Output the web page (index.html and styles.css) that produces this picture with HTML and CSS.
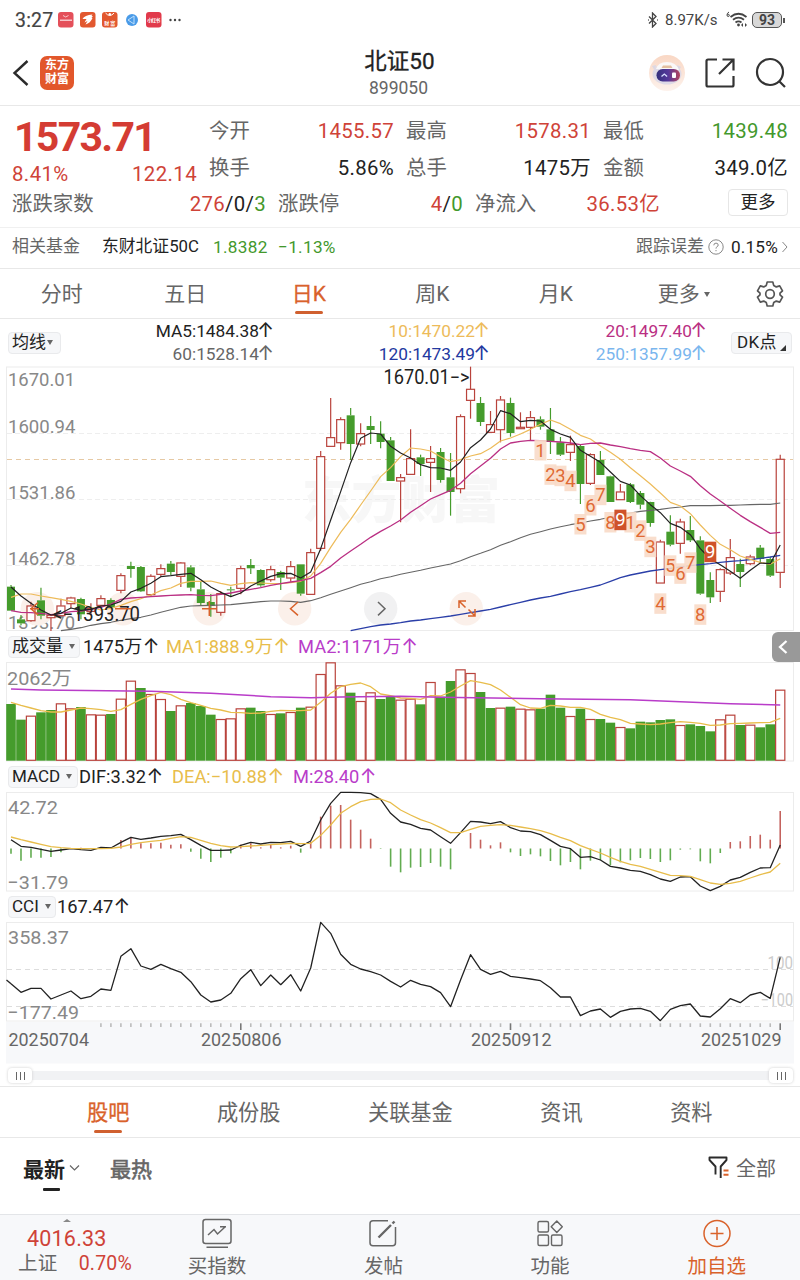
FILE: index.html
```html
<!DOCTYPE html>
<html lang="zh-CN">
<head>
<meta charset="utf-8">
<title>北证50 899050</title>
<link rel="stylesheet" href="styles.css">
</head>
<body>
<div class="status">
  <span class="clock">3:27</span>
  <svg class="apps" width="126" height="18" viewBox="0 0 126 18">
    <rect x="1" y="1" width="15.5" height="15.5" rx="3" fill="#e4505a"/>
    <path d="M6 4.500q2.700 3 5.500 0" fill="none" stroke="#fbd5d8" stroke-width=".9"/>
    <rect x="3" y="8.500" width="12" height="1.500" fill="#f6c6ca"/>
    <rect x="23" y="1" width="15.500" height="15.500" rx="3" fill="#e2582f"/>
    <path d="M25.500 8q2-4 10-4.500l-1 1.500 1.500.2-1.500 1.500 1 .3q-2 5-7 6.500l2-3.500-3 1.500 2-3.500z" fill="#fff"/>
    <rect x="45" y="1" width="15.500" height="15.500" rx="3" fill="#e2582f"/>
    <path d="M48.500 2q4.300 5 8.600 0" fill="none" stroke="#fff" stroke-width="1"/><circle cx="52.800" cy="3.300" r="1.200" fill="#fff"/>
    <text x="47.300" y="13.500" class="micro" textLength="11">财富</text>
    <circle cx="75" cy="9" r="6" fill="#4a9be8"/><path d="M71 9l6-4v8z" fill="none" stroke="#bfe0fb"/>
    <rect x="89" y="1" width="15.500" height="15.500" rx="3" fill="#e13a4b"/>
    <text x="90.300" y="11" class="micro" textLength="13">小红书</text>
    <g fill="#444"><circle cx="113.500" cy="9" r="1.200"/><circle cx="118" cy="9" r="1.200"/><circle cx="122.500" cy="9" r="1.200"/></g>
  </svg>
  <span class="grow"></span>
  <svg width="12" height="16" viewBox="0 0 12 16" fill="none" stroke="#444" stroke-width="1.300"><path d="M2 4.500l7 7L5.500 15V1L9 4.500l-7 7"/><path d="M1 8h.8M10 8h.8"/></svg>
  <span class="net">8.97K/s</span>
  <svg class="wifi" width="24" height="18" viewBox="0 0 24 18" fill="none" stroke="#444" stroke-width="1.800">
    <path d="M5.500 7q8-6.500 16 0M8 9.800q5.500-4.300 11 0M10.500 12.500q3-2.200 6 0"/><circle cx="13.500" cy="15" r="1.400" fill="#444" stroke="none"/><path d="M16 15l2-2v4zM22 15l-2-2v4z" fill="#444" stroke="none"/><path d="M4 2q-2 1-2 3 0 1.500 1.200 1.500T4.300 5.200 2.500 4.300" stroke-width="1"/>
  </svg>
  <span class="battery">93</span><span class="nub"></span>
</div>

<header class="header">
  <svg width="18" height="28" viewBox="0 0 18 28" fill="none" stroke="#2b2b2b" stroke-width="2.400"><path d="M15.500 2L2.500 14l13 12"/></svg>
  <div class="logo"><span>东方</span><span>财富</span></div>
  <div class="title"><h1>北证50</h1><p>899050</p></div>
  <svg class="robot" width="36" height="36" viewBox="0 0 36 36">
    <defs><linearGradient id="skin" x2="0" y2="1"><stop offset="0" stop-color="#f9d7c4"/><stop offset="1" stop-color="#fdf2ec"/></linearGradient><linearGradient id="visor"><stop offset="0" stop-color="#33307c"/><stop offset=".5" stop-color="#55389a"/><stop offset="1" stop-color="#b5455c"/></linearGradient></defs>
    <circle cx="18" cy="18" r="18" fill="url(#skin)"/>
    <path d="M3 11l4-1-1 6zM32 12l-4-2 1 6z" fill="#dcd8e4"/>
    <ellipse cx="18" cy="19" rx="14.500" ry="10.500" fill="#dedae6"/><path d="M7 14q2-7 11-7 9 0 12 8z" fill="#faf8f8"/><path d="M14 10.500h8l1.500 2.500h-11z" fill="#e2bfa0"/>
    <rect x="7.500" y="14" width="23.500" height="12.500" rx="6.200" fill="url(#visor)"/><path d="M12.500 21.500l2.800-2.500 2.800 2.500" fill="none" stroke="#d8deff" stroke-width="1.300"/><rect x="23" y="17.500" width="4" height="5.500" rx="1" fill="#fff"/>
  </svg>
  <svg class="share" width="30" height="30" viewBox="0 0 30 30" fill="none" stroke="#333" stroke-width="2.200"><path d="M12 1.500H3Q1.500 1.500 1.500 3v24q0 1.500 1.500 1.500h24q1.500 0 1.500-1.500V18M17.500 1.500h11v11M28.500 1.500L14 16"/></svg>
  <svg class="find" width="32" height="32" viewBox="0 0 32 32" fill="none" stroke="#333" stroke-width="2.200"><circle cx="15" cy="15" r="13"/><path d="M24 24l6 6"/></svg>
</header>

<section class="quote">
  <div class="top">
    <div class="main">
      <div class="price">1573.71</div>
      <div class="delta"><span>8.41%</span><span>122.14</span></div>
    </div>
    <dl class="stats">
      <div><dt>今开</dt><dd class="up">1455.57</dd></div><div><dt>最高</dt><dd class="up">1578.31</dd></div><div><dt>最低</dt><dd class="down">1439.48</dd></div>
      <div><dt>换手</dt><dd>5.86%</dd></div><div><dt>总手</dt><dd>1475万</dd></div><div><dt>金额</dt><dd>349.0亿</dd></div>
    </dl>
  </div>
  <dl class="breadth">
    <div class="b1"><dt>涨跌家数</dt><dd><span class="up">276</span>/0/<span class="down">3</span></dd></div>
    <div><dt>涨跌停</dt><dd><span class="up">4</span>/<span class="down">0</span></dd></div>
    <div><dt>净流入</dt><dd class="up">36.53亿</dd></div>
    <div class="more">更多</div>
  </dl>
</section>

<div class="fund">
  <span class="k">相关基金</span><span class="name">东财北证50C</span><span class="down v1">1.8382</span><span class="down v2">−1.13%</span>
  <span class="grow"></span>
  <span class="k">跟踪误差</span>
  <svg class="help" width="16" height="16" viewBox="0 0 16 16" fill="none" stroke="#888"><circle cx="8" cy="8" r="7.200"/><path d="M5.800 6.300q.1-2.200 2.200-2.200t2.200 1.900q0 1.200-1.200 1.800T8 9.600M8 11v1.200"/></svg>
  <span class="err">0.15%</span>
  <svg width="8" height="12" viewBox="0 0 8 12" fill="none" stroke="#888"><path d="M1.500 1l4.500 5-4.500 5"/></svg>
</div>

<nav class="periods">
  <a>分时</a><a>五日</a><a class="on">日K</a><a>周K</a><a>月K</a><a class="drop">更多<i class="tri"></i></a>
  <svg width="28" height="28" viewBox="0 0 28 28" fill="none" stroke="#555" stroke-width="1.700" stroke-linejoin="round"><path d="M11.200 2h5.600l.9 3.400 2.600 1.500 3.400-1 2.800 4.900-2.500 2.400v1.600l2.500 2.400-2.800 4.900-3.400-1-2.600 1.500-.9 3.400h-5.600l-.9-3.400-2.600-1.500-3.400 1-2.800-4.900 2.500-2.400v-1.600L1.500 10.800l2.800-4.900 3.400 1 2.600-1.500z"/><circle cx="14" cy="14" r="4.300"/></svg>
</nav>

<div class="averages">
  <span class="pill p1">均线<i class="tri"></i></span>
  <div class="ma">
    <span>MA5:1484.38<b>↑</b></span><span class="c10">10:1470.22<b>↑</b></span><span class="c20">20:1497.40<b>↑</b></span>
    <span class="c60">60:1528.14<b>↑</b></span><span class="c120">120:1473.49<b>↑</b></span><span class="c250">250:1357.99<b>↑</b></span>
  </div>
  <span class="pill p2">DK点<i class="corner"></i></span>
</div>

<svg id="price" class="chart" width="800" height="266" viewBox="0 6 800 266"></svg>
<div class="ind"><span class="pill i1">成交量<i class="tri"></i></span><span class="w1">1475万<b>↑</b></span><span class="yl w2">MA1:888.9万<b>↑</b></span><span class="pu">MA2:1171万<b>↑</b></span>
  <span class="handle"><svg width="12" height="16" viewBox="0 0 12 16" fill="none" stroke="#fff" stroke-width="2.300"><path d="M9.500 2L3 8l6.500 6"/></svg></span>
</div>
<svg id="volume" class="chart" width="800" height="100" viewBox="0 32 800 100"></svg>
<div class="ind"><span class="pill i2">MACD<i class="tri"></i></span><span class="w3">DIF:3.32<b>↑</b></span><span class="yl w4">DEA:−10.88<b>↑</b></span><span class="pu">M:28.40<b>↑</b></span></div>
<svg id="macd" class="chart" width="800" height="100" viewBox="0 162 800 100"></svg>
<div class="ind"><span class="pill i3">CCI<i class="tri"></i></span><span>167.47<b>↑</b></span></div>
<svg id="cci" class="chart" width="800" height="100" viewBox="0 32 800 100"></svg>
<svg id="axis" class="chart" width="800" height="42" viewBox="0 132 800 42"></svg>
<div class="range"><span class="knob"><i></i><i></i><i></i></span><span class="knob"><i></i><i></i><i></i></span></div>

<nav class="tabs"><a class="on">股吧</a><a>成份股</a><a>关联基金</a><a>资讯</a><a>资料</a></nav>
<div class="sort">
  <a class="on">最新</a>
  <svg class="chev" width="11" height="8" viewBox="0 0 11 8" fill="none" stroke="#666" stroke-width="1.200"><path d="M1 1.500l4.500 4.500L10 1.500"/></svg>
  <a class="hot">最热</a><span class="grow"></span>
  <svg class="filter" width="22" height="23" viewBox="0 0 22 23" fill="none" stroke="#2b2b2b" stroke-width="1.900" stroke-linejoin="round"><path d="M7.500 18.500v-8L1.500 4V1.500h17V4l-5.800 6.500v11.500"/><path d="M15.500 14.500h5M15.500 18.800h5" stroke="#d9622b" stroke-width="2"/></svg>
  <span class="all">全部</span>
</div>

<footer class="dock">
  <div class="index"><i></i><b>4016.33</b><p><span>上证</span><span class="up">0.70%</span></p></div>
  <div class="item"><svg width="30" height="31" viewBox="0 0 30 31" fill="none" stroke="#666" stroke-width="1.500"><rect x="1" y="1.500" width="28" height="24" rx="2.500"/><path d="M6 17l6-5.500 3.500 4.500L23 9M18 8.800h6M4.500 29.300h21.500"/></svg><span>买指数</span></div>
  <div class="item"><svg width="30" height="31" viewBox="0 0 30 31" fill="none" stroke="#666" stroke-width="1.500"><path d="M20 2.700H5Q2 2.700 2 5.700v19q0 3 3 3h19.500q3 0 3-3V9"/><path d="M10.500 19.500L23 7M24.500 5.500l2-2" stroke-width="2.400"/></svg><span>发帖</span></div>
  <div class="item"><svg width="30" height="31" viewBox="0 0 30 31" fill="none" stroke="#666" stroke-width="1.400"><rect x="3" y="3.500" width="10.500" height="10.500" rx="1.500"/><rect x="3" y="17" width="10.500" height="10.500" rx="1.500"/><rect x="16.500" y="17" width="10.500" height="10.500" rx="1.500"/><path d="M21.800 3l5.500 5.800-5.500 5.700-5.600-5.700z" stroke-linejoin="round"/></svg><span>功能</span></div>
  <div class="item add"><svg width="30" height="31" viewBox="0 0 30 31" fill="none" stroke="#d9622b" stroke-width="1.500"><circle cx="15" cy="15.500" r="13"/><path d="M8.500 15.500h13M15 9v13"/></svg><span>加自选</span></div>
</footer>
<script src="charts.js"></script>
</body>
</html>
```

FILE: styles.css
```css
* { box-sizing: border-box; margin: 0; padding: 0; }
body { width: 800px; height: 1280px; overflow: hidden; display: flex; flex-direction: column; background: #fff; color: #222; font-family: Roboto, "Noto Sans CJK SC", sans-serif; }
body > * { flex: none; }
i { font-style: normal; }
b { font-weight: 400; }
svg { display: block; flex: none; }
.grow { flex: 1; }
.up { color: #cf4338; }
.down { color: #43982c; }

.status { height: 40px; display: flex; align-items: center; padding: 0 15px; color: #444; }
.clock { width: 42px; font-size: 19.500px; letter-spacing: .2px; -webkit-text-stroke: .2px; }
.micro { font-size: 5px; font-weight: 700; fill: #fff; }
.net { margin-left: 6px; width: 60px; font-size: 15px; letter-spacing: 0; }
.wifi { margin-top: -2px; }
.battery { margin-left: 3px; width: 30px; height: 16px; border: 1.500px solid #555; border-radius: 5px; background: #d8d8d8; font-size: 14px; font-weight: 700; line-height: 14px; text-align: center; }
.nub { width: 2px; height: 5px; margin-left: 1px; background: #555; }

.header { height: 66px; display: flex; align-items: center; padding: 0 13px 0 12px; border-bottom: 1px solid #e8e8e8; }
.logo { margin-left: 10px; width: 34px; height: 34px; border-radius: 7px; background: #e2572b; color: #fff; display: flex; flex-direction: column; align-items: center; justify-content: center; font-size: 12px; line-height: 13.500px; font-weight: 700; }
.title { flex: 1; margin-left: 76px; text-align: center; padding-top: 3px; }
.title h1 { font-size: 22.500px; font-weight: 400; line-height: 28px; -webkit-text-stroke: .3px; }
.title p { font-size: 17.500px; line-height: 27px; color: #666; letter-spacing: 0; margin-left: -2px; }
.share { margin-left: 20px; }
.find { margin-left: 20px; }

.quote { height: 122px; padding: 7px 12px 0; border-bottom: 1px solid #f0f0f0; font-size: 20.400px; }
.top { display: flex; height: 73px; }
.main { width: 185px; color: #d43c33; }
.price { height: 49px; line-height: 48px; font-size: 41px; font-weight: 700; letter-spacing: -1.700px; padding-left: 2px; }
.delta { display: flex; justify-content: space-between; height: 24px; line-height: 24px; font-size: 20.400px; letter-spacing: .4px; color: #cf4338; }
.stats { margin-left: 12px; flex: 1; display: grid; grid-template-columns: repeat(3, 185px); column-gap: 12px; grid-auto-rows: 36.500px; line-height: 36.500px; }
.stats div, .breadth div { display: flex; justify-content: space-between; }
dt { color: #666; }
dd { letter-spacing: .3px; }
.breadth { display: flex; gap: 12px; height: 36px; line-height: 36px; align-items: center; }
.breadth div { width: 185px; }
.breadth .b1 { width: 254px; }
.breadth .more { margin-left: 56px; width: 60px; height: 27px; line-height: 25px; margin-top: -4px; border: 1px solid #e6e6e6; border-radius: 4px; justify-content: center; font-size: 17.500px; }

.fund { height: 41px; display: flex; align-items: center; padding: 0 11px 3px 12px; border-bottom: 1px solid #e8e8e8; font-size: 17.200px; letter-spacing: .3px; line-height: 24px; }
.fund .k { color: #666; letter-spacing: 0; font-size: 17px; margin-top: -1px; }
.fund .name { width: 111px; margin-left: 22px; font-size: 16.800px; letter-spacing: 0; margin-top: -1px; }
.fund .v1 { width: 65px; }
.help { margin: 0 7px 0 4px; }
.err { margin-right: 3px; letter-spacing: .2px; }

.periods { height: 50px; display: flex; align-items: center; border-bottom: 1px solid #e8e8e8; font-size: 21px; color: #666; }
.periods a { width: 123.500px; height: 49px; line-height: 51px; text-align: center; }
.periods .drop { padding-left: 9px; }
.periods svg { margin-left: 15px; }
.periods .on { color: #d9622b; position: relative; -webkit-text-stroke: .3px; }
.periods .on::after, .tabs .on::after { content: ""; position: absolute; left: 50%; bottom: 4px; width: 28px; height: 3px; margin-left: -14px; border-radius: 1.500px; background: #d0602f; }
.tri { display: inline-block; border: 3.500px solid transparent; border-top: 5.500px solid #666; border-bottom: 0; vertical-align: 4px; margin-left: 4px; }

.averages { height: 47px; display: flex; align-items: center; padding: 0 8px; }
.pill { height: 22px; line-height: 19px; background: #f6f7f9; border: 1px solid #e9eaec; border-radius: 4px; font-size: 17px; padding-left: 3px; white-space: nowrap; }
.pill .tri { vertical-align: 3px; margin-left: 1px; }
.p1 { width: 53px; }
.p2 { width: 61px; margin-left: 24px; padding-left: 5px; letter-spacing: .3px; }
.corner { display: inline-block; margin-left: 3px; border-left: 6px solid transparent; border-bottom: 6px solid #333; vertical-align: -3px; }
.ma { width: 646px; display: grid; grid-template-columns: 213px 216px 217px; grid-auto-rows: 23px; line-height: 23px; text-align: right; font-size: 17.300px; }
.ma b, .ind b { font-family: Inter, sans-serif; font-size: 20px; line-height: 20px; display: inline-block; width: 15px; text-align: right; text-indent: -2px; }
.c10 { color: #edbb5a; }
.c20 { color: #ba2f83; }
.c60 { color: #666; }
.c120 { color: #2338a0; }
.c250 { color: #7ab6ee; }

.ind { height: 30px; display: flex; align-items: center; padding-left: 8px; font-size: 18.300px; line-height: 28px; position: relative; }
.ind b { width: 17px; }
.i1 { width: 72px; margin-right: 3px; }
.i2 { width: 70px; margin-right: 1px; }
.i3 { width: 48px; margin-right: 1px; }
.i1 .tri, .i2 .tri, .i3 .tri { margin-left: 6px; }
.w1 { width: 83px; }
.w2 { width: 132px; }
.w3 { width: 93px; }
.w4 { width: 121px; }
.w2 + .pu { letter-spacing: .1px; }
.yl { color: #e8bd4b; }
.pu { color: #b93cc9; }
.handle { position: absolute; right: 0; top: 0; width: 28px; height: 30px; padding: 7px 0 0 5px; border-radius: 6px 0 0 6px; background: #999; }

.chart { overflow: visible; }
.chart text { font-family: Roboto, "Noto Sans CJK SC", sans-serif; }
.scale { font-size: 19px; fill: #888; }
.mark { font-size: 19.500px; fill: #222; }
.faint { font-size: 17.500px; fill: #ccc; }
.date { font-size: 18px; fill: #666; }
.count { font-size: 18.500px; fill: #e06a35; text-anchor: middle; }
.count.hot { fill: #fff; }
.chart .water { font-family: "Noto Sans CJK SC", sans-serif; font-size: 50px; font-weight: 900; fill: #f7f7f7; }

.range { height: 23px; margin: 0 7px 0 8px; display: flex; justify-content: space-between; align-items: center; background: linear-gradient(#f1f2f4, #f1f2f4) 0 50% / 100% 9px no-repeat; }
.knob { width: 24px; height: 15px; border-radius: 4px; background: #fff; box-shadow: 0 0 3px #ccc; display: flex; align-items: center; justify-content: center; gap: 3px; }
.knob i { width: 1px; height: 8px; background: #666; }

.tabs { height: 52px; display: flex; gap: 87.500px; padding-left: 87px; border-top: 1px solid #e8e8e8; border-bottom: 1px solid #e8e8e8; margin-top: -1px; font-size: 21.200px; line-height: 52px; color: #666; }
.tabs .on { position: relative; color: #d9622b; -webkit-text-stroke: .3px; }
.tabs .on::after { bottom: 4px; }
.sort { height: 77px; display: flex; align-items: center; padding: 0 24px 17px 23px; border-bottom: 1px solid #e3e5e8; font-size: 21px; color: #666; }
.sort .on { color: #222; font-weight: 700; position: relative; }
.sort .on::after { content: ""; position: absolute; left: 20px; bottom: -8px; width: 17px; height: 3px; border-radius: 1px; background: #222; }
.chev { margin-left: 4px; }
.hot { margin-left: 30px; -webkit-text-stroke: .6px; }
.all { margin-left: 6px; font-size: 20px; }

.dock { height: 65px; background: #f7f8fa; display: flex; color: #666; font-size: 19.500px; }
.index { width: 133.600px; }
.index i { display: block; width: 0; margin: 4px 0 0 63px; border: 4px solid transparent; border-top: 0; border-bottom: 3px solid #888; }
.index b { display: block; margin-left: 27px; color: #cf4338; font-size: 21.500px; line-height: 33px; letter-spacing: .2px; }
.index p { display: flex; justify-content: space-between; width: 114px; margin-left: 18px; line-height: 17px; font-size: 19.500px; letter-spacing: .2px; }
.item { width: 166.600px; display: flex; flex-direction: column; align-items: center; padding-top: 3px; line-height: 36px; }
.add { color: #d9622b; }
```

FILE: charts.js
```js
// Vertical data is stored in thirds of a pixel; one column per trading day.
const X = i => 11 + 9.99 * i;
const UP = '#b9433c', DOWN = '#459c2c';
const $ = id => document.getElementById(id);
const line = (x1, y1, x2, y2, c, extra = '') => `<path d="M${x1} ${y1}L${x2} ${y2}" stroke="${c}" fill="none" ${extra}/>`;
const rect = (x, y, w, h, extra) => `<rect x="${x}" y="${y}" width="${w}" height="${h}" ${extra}/>`;
const text = (s, x, y, w, cls) => `<text x="${x}" y="${y}" class="${cls}" ${w ? `textLength="${w}" lengthAdjust="spacingAndGlyphs"` : ''}>${s}</text>`;
const curve = (ys, c, start = 0, w = 1.3) => `<polyline fill="none" stroke="${c}" stroke-width="${w}" stroke-linejoin="round" points="${ys.map((y, i) => `${X(i + start)},${y / 3}`).join(' ')}"/>`;
const frame = (top, h) => rect(6.5, top, 787, h, 'fill="none" stroke="#ececec"');
const dashes = (y, c, d) => line(7, y, 793, y, c, `stroke-dasharray="${d}"`);

const candles = `g675,680,752,752 g765,778,790,796 r725,737,783,785 g683,721,767,778 r763,765,774,813 r716,737,768,768 r710,713,732,745 g713,717,763,778 r730,745,755,765 r706,715,737,742
g715,720,742,748 r640,646,692,700 g605,618,627,653 g618,621,694,696 r643,648,705,708 r613,625,644,650 g603,611,636,645 r606,608,650,681 g616,622,683,694 g665,688,729,737
g702,726,738,770 r693,700,758,767 g680,688,691,708 r617,625,686,703 g597,615,625,642 g628,630,676,680 r617,628,660,665 g632,636,653,690 r603,619,655,665 g613,613,701,707
r566,577,704,704 r273,289,566,572 r114,232,260,260 r172,178,249,269 g144,166,252,300 r190,220,253,259 g168,198,210,252 g184,221,246,265 g231,241,363,363 r342,352,364,487
r208,295,344,344 g284,292,312,348 r258,295,308,396 g264,276,360,368 g279,352,396,467 r163,169,387,400 r20,87,122,176 g111,129,186,198 r153,193,218,218 r108,119,210,247
g113,129,219,230 r157,201,207,207 r153,172,203,242 g169,178,200,209 g144,208,246,282 g231,247,284,288 r227,253,278,303 g255,258,372,432 r280,283,371,375 g273,300,345,345
g347,349,426,426 r372,395,420,420 g369,373,426,429 g393,399,434,448 g425,426,489,500 r539,545,670,670 g466,515,554,559 r476,485,551,581 g468,510,541,546 g529,541,701,704
g637,660,712,729 r625,628,695,726 r537,592,640,645 g596,612,636,681 r584,590,612,616 g555,563,597,610 g590,597,647,651 r284,297,638,684`.split(/\s+/);

const ma5 = [681,708,730,750,765,760,744,751,748,738,735,724,696,685,670,650,647,643,640,659,681,697,710,699,678,663,649,641,640,654,636,566,480,395,308,235,219,222,259,279,294,314,323,324,331,306,263,240,207,152,161,185,181,183,208,222,232,271,289,307,336,364,375,407,434,458,490,502,524,566,597,614,634,655,631,609,611,555];
const ma10 = [712,702,702,708,713,718,724,732,742,750,745,736,725,716,705,692,684,670,664,664,663,670,676,671,668,669,671,671,668,664,648,610,562,517,478,435,393,350,323,290,264,267,273,290,305,299,288,281,265,243,234,222,208,193,180,191,208,226,237,258,277,298,323,347,372,399,427,438,461,495,526,553,569,588,598,607,613,596];
const ma20 = [752,757,758,760,764,760,755,753,748,742,732,718,714,712,710,708,706,705,704,706,707,703,699,693,688,683,676,671,666,662,655,638,619,594,573,553,532,514,498,480,457,437,417,404,391,370,341,318,295,267,249,244,241,242,244,246,249,254,250,249,255,260,266,271,275,294,318,333,349,377,402,423,445,466,485,502,520,517];
const ma60 = [812,808,803,796,791,787,781,776,772,765,757,749,742,738,737,736,735,734,731,728,725,723,723,724,727,722,713,703,693,683,673,665,656,650,643,637,631,624,618,612,602,590,580,569,556,545,533,523,515,507,500,494,489,483,478,472,465,459,454,451,448,444,441,437,437,437,436,436,435,434,433,433,429];
const ma120 = [812,806,800,795,792,788,783,780,776,772,768,763,758,753,748,741,734,727,720,714,709,702,695,689,682,675,664,653,645,639,633,629,625,621,617,614,611,607,604,602,599,595,591,586];

// [day, label, centre y, highlighted]
const counts = [[53,1,270],[54,2,343],[55,3,347],[56,4,362],[57,5,492],[58,6,435],[59,7,404],[60,8,486],[62,1,486],[61,9,479,1],[63,2,511],[64,3,560],[65,4,730],[66,5,616],[67,6,640],[68,7,607],[69,8,763],[70,9,575,1]];

let s = text('东方财富', 302, 158, 198, 'water') + frame(7, 263.5);
s += [73.5, 139.5, 205.5].map(y => dashes(y, '#eee', '5 3')).join('') + dashes(99.5, '#e6c9a4', '5 4');
s += text('1670.01', 8, 25.6, 67, 'scale') + text('1600.94', 8, 73, 67.500, 'scale') + text('1531.86', 8, 139.300, 67.500, 'scale') + text('1462.78', 8, 205.300, 67.500, 'scale') + text('1393.70', 8, 269.300, 67, 'scale');
s += [37.3, 123, 209.300, 294.700, 380.700, 466.300].map((x, i) => `<circle cx="${x}" cy="248.700" r="16.700" fill="${i === 4 ? '#f1f1f2' : '#fbf0ea'}"/>`).join('');
candles.forEach((c, i) => {
  const up = c[0] === 'r', col = up ? UP : DOWN, x = X(i);
  const [h, t, b, l] = c.slice(1).split(',').map(v => v / 3);
  s += line(x, h, x, t, col, 'stroke-width="1.200"') + line(x, b, x, l, col, 'stroke-width="1.200"');
  s += up ? rect(x - 4, t + .3, 8, Math.max(b - t - .6, 1), `fill="${b - t > 3 ? '#fff' : 'none'}" stroke="${col}" stroke-width="1.200"`) : rect(x - 4, t, 8, b - t, `fill="${col}"`);
});
s += curve(ma60, '#666', 5, 1.100) + curve(ma120, '#2b3fa8', 34, 1.300) + curve(ma10, '#edbb5a', 0, 1.200) + curve(ma20, '#ba2f83', 0, 1.300) + curve(ma5, '#222', 0, 1.200);
s += counts.map(([i, n, y, hot]) => rect(X(i) - 6, y / 3 - 10, 12, 20.500, `fill="${hot ? '#cf522a' : '#f8dac8'}" fill-opacity="${hot ? 1 : .9}"`) + `<text x="${X(i)}" y="${y / 3 + 6.700}" class="count${hot ? ' hot' : ''}">${n}</text>`).join('');
s += text('&lt;−1393.70', 53, 261, 87, 'mark') + text('1670.01−&gt;', 383.500, 24, 86, 'mark');
s += `<g fill="none" stroke="#d9622b" stroke-width="1.500"><path d="M38 242.500l-7 6.200 7 6.200M30 248.700h9M115 248.700h16M202 248.700h15M209.300 241v15M298 242l-7.500 6.700 7.500 6.700M459 248v-7h7M459.500 241.500l6 6M475 249v7h-7M474.500 255.500l-6-6"/><path d="M378 242l7 6.700-7 6.700" stroke="#666"/></g>`;
$('price').innerHTML = s;

const vol = 'g222 g269 r257 g247 g240 r220 r235 g231 r253 r254 g252 r206 r152 g174 r192 r207 g243 r226 g219 g228 g254 r267 r265 r235 g233 g243 r252 g250 r246 g233 r230 r132 r97 r166 g188 r213 r187 g207 g200 r209 r206 g223 r156 g200 g153 r118 r129 g186 g234 r233 g230 r236 r238 g236 g194 g233 r258 g236 r267 g267 g278 r291 g295 g275 g277 g270 g268 r285 g283 g288 g304 r268 r254 g285 r284 g292 g283 r179'.split(' ');
const volMa = [217,226,234,242,246,246,240,234,236,239,244,239,223,208,197,187,194,208,218,226,235,240,247,248,250,249,244,241,242,242,240,217,190,170,163,159,170,192,197,204,205,208,197,198,186,168,152,157,164,180,202,224,234,235,226,228,232,232,238,253,262,269,280,282,284,282,278,275,277,280,286,285,281,280,279,278,277,265];
const slow = [[0,177],[3,180],[14,184],[20,190],[26,200],[30,203],[33,201],[39,199],[43,202],[53,206],[62,209],[72,221],[77,225]];
s = frame(32.500, 98.500) + text('2062万', 7, 55, 64.500, 'scale');
vol.forEach((v, i) => {
  const y = v.slice(1) / 3, x = X(i);
  s += v[0] === 'g' ? rect(x - 4.800, y, 9.600, 130.700 - y, `fill="${DOWN}"`) : rect(x - 4.600, y + .5, 9.200, 129.800 - y, `fill="#fff" stroke="${UP}" stroke-width="1.200"`);
});
s += curve(volMa, '#e8bd4b') + `<polyline fill="none" stroke="#b93cc9" stroke-width="1.500" points="${slow.map(p => `${X(p[0])},${p[1] / 3}`).join(' ')}"/>`;
$('volume').innerHTML = s;

const hist = [671,692,683,683,681,667,656,653,656,651,653,630,621,640,640,638,644,643,665,686,696,683,670,644,640,652,643,652,647,668,636,560,527,525,569,599,626,657,710,727,713,711,699,710,718,656,609,629,646,637,667,678,673,679,693,706,696,718,692,690,706,697,691,684,687,696,691,659,658,694,700,669,636,634,618,614,629,543];
const dif = [629,649,652,658,664,660,656,659,661,652,654,637,622,628,624,619,617,613,629,646,661,661,660,646,637,642,637,638,634,649,633,570,520,487,487,488,491,508,550,576,583,595,600,620,640,608,574,576,581,575,593,603,605,614,631,649,656,682,680,690,709,714,721,724,734,747,754,741,740,768,782,769,750,742,727,714,713,645];
const dea = [621,629,636,643,650,653,655,656,656,656,655,651,643,638,634,631,625,620,622,631,640,647,651,650,648,646,644,642,640,641,640,616,585,550,530,515,508,507,518,540,555,569,579,593,608,608,598,589,586,584,586,591,596,602,611,622,632,647,658,669,682,694,703,709,718,727,736,737,739,749,759,763,760,754,744,734,726,700];
s = frame(162.500, 98.500) + text('42.72', 8, 183.700, 50, 'scale') + text('−31.79', 7.500, 258.700, 61, 'scale');
hist.forEach((v, i) => { if (v !== 656) s += line(X(i), 218.500, X(i), v / 3, v < 656 ? '#c4625d' : '#62ac50', 'stroke-width="1.600"'); });
s += curve(dif, '#222') + curve(dea, '#e8bd4b');
$('macd').innerHTML = s;

const cci = [281,307,295,295,327,315,303,326,319,297,301,199,176,228,238,223,236,247,275,315,336,330,310,266,239,287,255,284,254,303,234,97,130,193,223,237,245,255,274,291,271,283,290,308,350,270,194,238,253,244,259,263,267,272,293,321,321,377,363,357,382,364,357,355,364,392,358,347,342,378,381,356,326,338,315,307,325,202];
s = frame(32.500, 98.500) + dashes(79.500, '#ddd', '5 4') + dashes(116.500, '#ddd', '5 4');
s += text('358.37', 8, 54, 61, 'scale') + text('−177.49', 7.500, 129, 71.500, 'scale') + text('100', 767.500, 79.300, 25.500, 'faint') + text('−100', 760.500, 116.300, 32.500, 'faint');
s += line(6.500, 90, X(0), 281 / 3, '#222', 'stroke-width="1.300"') + curve(cci, '#222');
$('cci').innerHTML = s;

s = rect(6, 132, 788, 41.500, 'fill="#f7f8fa"');
for (let i = 9; i < 78; i++) {
  const major = i === 23 || i === 50 || i === 77;
  s += line(X(i), 133.300, X(i), major ? 140 : 137, major ? '#777' : '#bbb', 'stroke-width="1.600"');
}
s += text('20250704', 8.500, 156.300, 80.500, 'date') + text('20250806', 201, 156.300, 80.500, 'date') + text('20250912', 471, 156.300, 80.500, 'date') + text('20251029', 701, 156.300, 80.500, 'date');
$('axis').innerHTML = s;
```
